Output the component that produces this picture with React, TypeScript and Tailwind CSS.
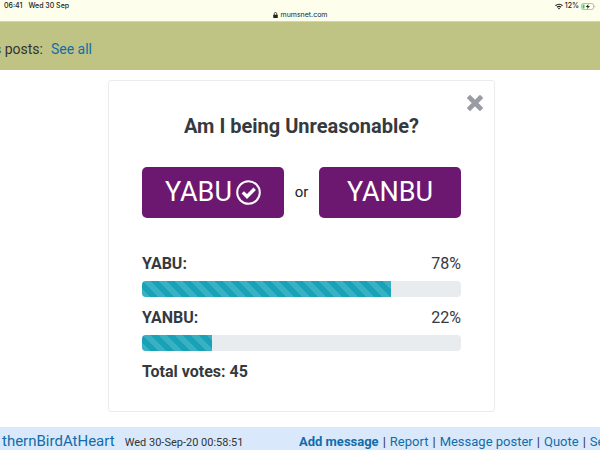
type Result = { label: string; percent: number };

const results: Result[] = [
  { label: "YABU", percent: 78 },
  { label: "YANBU", percent: 22 },
];

function StatusBar() {
  return (
    <header className="relative flex h-[22px] items-start justify-between border-b border-[#d3d4b4] bg-[#fefeec] px-1 font-['Inter',sans-serif] text-[7px] leading-3 font-medium text-[#222]">
      <div className="flex gap-1.5">
        <span>06:41</span>
        <span>Wed 30 Sep</span>
      </div>
      <div className="absolute inset-x-0 top-[9px] flex items-center justify-center gap-[3px] font-normal">
        <svg className="h-[6px] w-[5px]" viewBox="0 0 10 12" aria-hidden="true">
          <path d="M2.5 6V3.5a2.5 2.5 0 0 1 5 0V6" fill="none" stroke="#222" strokeWidth="1.6" />
          <rect x="0.5" y="5.5" width="9" height="6.5" rx="1" fill="#222" />
        </svg>
        <span>mumsnet.com</span>
      </div>
      <div className="flex items-center gap-[2px]">
        <svg className="h-[7px] w-2" viewBox="0 0 16 13" fill="none" stroke="#222" strokeWidth="2.2" aria-hidden="true">
          <path d="M1 5a10 10 0 0 1 14 0" />
          <path d="M4 8a6 6 0 0 1 8 0" />
          <path d="M8 12.5 5.8 10.2a3 3 0 0 1 4.4 0z" fill="#222" stroke="none" />
        </svg>
        <span>12%</span>
        <svg className="h-[7px] w-[15px]" viewBox="0 0 30 14" aria-hidden="true">
          <rect x="1" y="1" width="24" height="12" rx="3.5" fill="none" stroke="#999" strokeWidth="1.3" />
          <rect x="3" y="3" width="4" height="8" rx="1" fill="#35d05a" />
          <path d="M15 2 9.5 8H13l-1 4 6-6h-4z" fill="#222" />
          <path d="M27 5v4a2.4 2.4 0 0 0 0-4z" fill="#999" />
        </svg>
      </div>
    </header>
  );
}

function CheckCircle() {
  return (
    <svg className="size-[25px]" viewBox="0 0 25 25" aria-hidden="true">
      <circle cx="12.5" cy="12.5" r="11.3" fill="none" stroke="#fff" strokeWidth="2" />
      <path d="M6.8 12.4 11 16.5l7.7-7.7" fill="none" stroke="#fff" strokeWidth="3.4" />
    </svg>
  );
}

function ResultRow({ label, percent }: Result) {
  return (
    <div>
      <div className="flex justify-between leading-6">
        <strong className="font-bold">{label}:</strong>
        <span>{percent}%</span>
      </div>
      <div className="mt-[5px] mb-[9px] h-4 overflow-hidden rounded bg-[#e9ecef]">
        <div
          className="h-full bg-[#17a2b8] bg-[linear-gradient(45deg,rgba(255,255,255,0.15)_25%,transparent_25%,transparent_50%,rgba(255,255,255,0.15)_50%,rgba(255,255,255,0.15)_75%,transparent_75%,transparent)] bg-[length:16px_16px]"
          style={{ width: `${percent}%` }}
        />
      </div>
    </div>
  );
}

function Poll() {
  return (
    <section className="relative rounded-[3px] border border-[#ebebec] px-[33px] pt-[31px] pb-[27px] text-[#343a40]">
      <button type="button" aria-label="Close" className="absolute top-[14px] right-[11px]">
        <svg className="size-4" viewBox="0 0 16 16" aria-hidden="true">
          <path d="M3 3l10 10M13 3L3 13" stroke="#999ca3" strokeWidth="4.6" strokeLinecap="square" strokeLinejoin="round" />
        </svg>
      </button>
      <h2 className="text-center text-xl leading-7 font-bold">Am I being Unreasonable?</h2>
      <div className="mt-[27px] flex items-center text-[#222]">
        <button type="button" className="flex h-[51px] flex-1 items-center justify-center gap-1 rounded-[5px] bg-[#6c1871] text-[27px] text-white">
          YABU
          <CheckCircle />
        </button>
        <span className="w-[35px] text-center text-[15px]">or</span>
        <button type="button" className="h-[51px] flex-1 rounded-[5px] bg-[#6c1871] text-[27px] text-white">
          YANBU
        </button>
      </div>
      <div className="mt-[34px] text-base">
        {results.map((r) => (
          <ResultRow key={r.label} {...r} />
        ))}
        <strong className="block leading-6 font-bold">Total votes: 45</strong>
      </div>
    </section>
  );
}

function PostBar() {
  return (
    <footer className="flex h-[23px] items-center justify-between overflow-hidden bg-[#d9e9fb] pt-[6px] whitespace-nowrap text-[#333]">
      <div className="flex items-baseline gap-[10px] pl-[2px]">
        <a href="#user" className="text-[15px] leading-5 text-[#136ca9]">thernBirdAtHeart</a>
        <span className="text-[11px]">Wed 30-Sep-20 00:58:51</span>
      </div>
      <nav className="flex w-[301px] gap-1 text-[13px] leading-5 [&_a]:text-[#136ca9]">
        <a href="#add" className="font-bold">Add message</a>|
        <a href="#report">Report</a>|
        <a href="#message">Message poster</a>|
        <a href="#quote">Quote</a>|
        <a href="#see">Se</a>
      </nav>
    </footer>
  );
}

export default function App() {
  return (
    <div className="h-screen overflow-hidden bg-white font-['Roboto',sans-serif]">
      <StatusBar />
      <div className="flex h-12 items-center gap-2 overflow-hidden bg-[#bfc384] pt-[6px] text-sm text-[#333]">
        <span className="-ml-[6px]">s posts:</span>
        <a href="#all" className="text-[#136ca9]">See all</a>
      </div>
      <main className="pt-[10px] pr-[105px] pb-[15px] pl-[108px]">
        <Poll />
      </main>
      <PostBar />
    </div>
  );
}
